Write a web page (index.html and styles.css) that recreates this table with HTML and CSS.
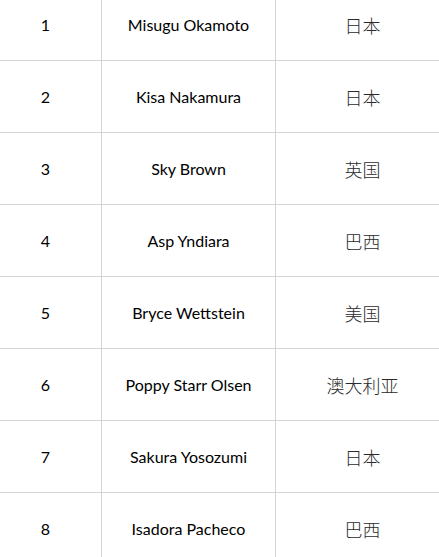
FILE: index.html
```html
<!DOCTYPE html>
<html lang="zh">
<head>
<meta charset="utf-8">
<title>Athletes</title>
<link rel="stylesheet" href="styles.css">
</head>
<body>
<table class="grid">
  <colgroup>
    <col class="c-num">
    <col class="c-name">
    <col class="c-country">
  </colgroup>
  <tbody>
    <tr><td class="num">1</td><td class="name">Misugu Okamoto</td><td class="country">日本</td></tr>
    <tr><td class="num">2</td><td class="name">Kisa Nakamura</td><td class="country">日本</td></tr>
    <tr><td class="num">3</td><td class="name">Sky Brown</td><td class="country">英国</td></tr>
    <tr><td class="num">4</td><td class="name">Asp Yndiara</td><td class="country">巴西</td></tr>
    <tr><td class="num">5</td><td class="name">Bryce Wettstein</td><td class="country">美国</td></tr>
    <tr><td class="num">6</td><td class="name">Poppy Starr Olsen</td><td class="country">澳大利亚</td></tr>
    <tr><td class="num">7</td><td class="name">Sakura Yosozumi</td><td class="country">日本</td></tr>
    <tr><td class="num">8</td><td class="name">Isadora Pacheco</td><td class="country">巴西</td></tr>
  </tbody>
</table>
</body>
</html>
```
FILE: styles.css
```css
html, body {
  margin: 0;
  padding: 0;
  background: #ffffff;
  overflow: hidden;
}
body {
  width: 439px;
  height: 557px;
}
.grid {
  border-collapse: collapse;
  table-layout: fixed;
  width: 460px;
  margin-left: -11px;
  margin-top: -12px;
  font-family: Lato, "Liberation Sans", sans-serif;
  font-size: 16px;
  color: #000000;
}
.c-num { width: 112px; }
.c-name { width: 174px; }
.c-country { width: 174px; }
.grid td {
  height: 72px;
  padding: 0;
  text-align: center;
  vertical-align: middle;
  border: 1px solid #d4d4d4;
  box-sizing: border-box;
}
.grid td.country {
  font-family: "Noto Sans CJK SC", sans-serif;
  font-weight: 300;
  font-size: 18px;
  color: #2a2a2a;
}
```
